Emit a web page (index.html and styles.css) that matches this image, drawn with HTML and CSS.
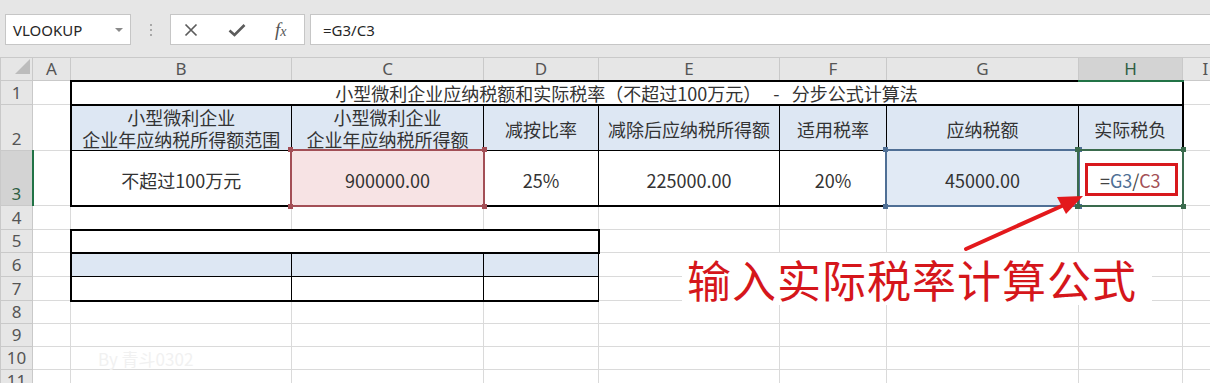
FILE: index.html
```html
<!DOCTYPE html>
<html lang="zh-CN">
<head>
    <meta charset="UTF-8">
    <meta name="viewport" content="width=device-width, initial-scale=1.0">
    <title>小型微利企业应纳税额和实际税率</title>
    <link rel="stylesheet" href="styles.css">
</head>
<body>
    <div class="toolbar">
        <div class="namebox">VLOOKUP<span class="caret"></span></div>
        <div class="grip"><i></i><i></i><i></i></div>
        <div class="fx-buttons">
            <svg class="btn-icon" width="16" height="16" viewBox="0 0 16 16">
                <path d="M2.5 2.5 L13.5 13.5 M13.5 2.5 L2.5 13.5" stroke="#5c5c5c" stroke-width="1.7" fill="none"/>
            </svg>
            <svg class="btn-icon" width="18" height="16" viewBox="0 0 18 16">
                <path d="M1.5 8.5 L6.5 13 L16.5 3" stroke="#5c5c5c" stroke-width="2.6" fill="none"/>
            </svg>
            <span class="fx">f<span>x</span></span>
        </div>
        <div class="formula">=G3/C3</div>
    </div>

    <div class="sheet-wrap">
        <table class="sheet">
            <colgroup>
                <col class="w-rh"><col class="w-a"><col class="w-b"><col class="w-c"><col class="w-d">
                <col class="w-e"><col class="w-f"><col class="w-g"><col class="w-h"><col class="w-i">
            </colgroup>
            <tr class="r-head">
                <th class="corner"><span class="tri"></span></th>
                <th>A</th><th>B</th><th>C</th><th>D</th><th>E</th><th>F</th><th>G</th><th class="on-col">H</th><th>I</th>
            </tr>
            <tr class="r1">
                <th class="rn">1</th><td></td>
                <td colspan="7" class="title">小型微利企业应纳税额和实际税率（不超过100万元）&nbsp;&nbsp;&nbsp;-&nbsp;&nbsp;&nbsp;分步公式计算法</td>
                <td></td>
            </tr>
            <tr class="r2">
                <th class="rn">2</th><td></td>
                <td class="hd first">小型微利企业<br>企业年应纳税所得额范围</td>
                <td class="hd">小型微利企业<br>企业年应纳税所得额</td>
                <td class="hd single">减按比率</td>
                <td class="hd single">减除后应纳税所得额</td>
                <td class="hd single">适用税率</td>
                <td class="hd single">应纳税额</td>
                <td class="hd single last">实际税负</td>
                <td></td>
            </tr>
            <tr class="r3">
                <th class="rn on-row">3</th><td></td>
                <td class="val first">不超过100万元</td>
                <td class="val ref-c num">900000.00
                    <span class="sel sel-c"><i class="tl"></i><i class="tr"></i><i class="bl"></i><i class="br"></i></span>
                </td>
                <td class="val num">25%</td>
                <td class="val num">225000.00</td>
                <td class="val num">20%</td>
                <td class="val ref-g num">45000.00
                    <span class="sel sel-g"><i class="tl"></i><i class="tr"></i><i class="bl"></i><i class="br"></i></span>
                </td>
                <td class="val last active num"><span class="op">=</span><span class="ref-g-txt">G3</span><span class="op">/</span><span class="ref-c-txt">C3</span>
                    <span class="sel sel-h"><i class="tl"></i><i class="tr"></i><i class="bl"></i><i class="br"></i></span>
                    <span class="mark"></span>
                </td>
                <td></td>
            </tr>
            <tr class="r4">
                <th class="rn">4</th><td></td><td></td><td></td><td></td><td></td><td></td><td></td><td></td><td></td>
            </tr>
            <tr class="r5">
                <th class="rn">5</th><td></td><td colspan="3" class="box-top"></td><td></td><td></td><td></td><td></td><td></td>
            </tr>
            <tr class="r6">
                <th class="rn">6</th><td></td><td class="band first"></td><td class="band"></td><td class="band last"></td><td></td><td></td><td></td><td></td><td></td>
            </tr>
            <tr class="r7">
                <th class="rn">7</th><td></td><td class="foot first"></td><td class="foot"></td><td class="foot last"></td><td></td><td></td><td></td><td></td><td></td>
            </tr>
            <tr class="r8">
                <th class="rn">8</th><td></td><td></td><td></td><td></td><td></td><td></td><td></td><td></td><td></td>
            </tr>
            <tr class="r9">
                <th class="rn">9</th><td></td><td></td><td></td><td></td><td></td><td></td><td></td><td></td><td></td>
            </tr>
            <tr class="r10">
                <th class="rn">10</th><td></td><td></td><td></td><td></td><td></td><td></td><td></td><td></td><td></td>
            </tr>
            <tr class="r11">
                <th class="rn">11</th><td></td><td></td><td></td><td></td><td></td><td></td><td></td><td></td><td></td>
            </tr>
        </table>

        <svg class="arrow" width="150" height="80" viewBox="0 0 150 80">
            <line x1="16" y1="64" x2="114" y2="20" stroke="#e3191c" stroke-width="4" stroke-linecap="round"/>
            <polygon points="133,11 116,29 107,12" fill="#e3191c"/>
        </svg>
        <div class="callout">输入实际税率计算公式</div>
        <div class="watermark">By 青斗0302</div>
    </div>
</body>
</html>
```

FILE: styles.css
```css
body {
    margin: 0;
    background: #ffffff;
    font-family: "Noto Sans CJK SC", "Noto Sans", sans-serif;
    overflow: hidden;
}

/* formula bar */
.toolbar {
    height: 57px;
    box-sizing: border-box;
    padding-top: 14px;
    background: #e6e6e6;
    display: flex;
    align-items: flex-start;
}
.namebox {
    margin-left: 5px;
    width: 126px;
    height: 31px;
    box-sizing: border-box;
    padding: 0 7px 0 7px;
    background: #fff;
    border: 1px solid #c6c6c6;
    display: flex;
    align-items: center;
    justify-content: space-between;
    font-family: "Noto Sans", sans-serif;
    font-size: 15px;
    color: #262626;
}
.caret {
    width: 0;
    height: 0;
    border-left: 4px solid transparent;
    border-right: 4px solid transparent;
    border-top: 4px solid #8a8a8a;
}
.grip {
    width: 39px;
    height: 31px;
    display: flex;
    flex-direction: column;
    align-items: center;
    justify-content: center;
    gap: 3px;
}
.grip i {
    width: 2px;
    height: 2px;
    background: #a8a8a8;
}
.fx-buttons {
    width: 135px;
    height: 31px;
    box-sizing: border-box;
    padding-left: 12px;
    background: #fff;
    border: 1px solid #c6c6c6;
    display: flex;
    align-items: center;
    gap: 29px;
}
.fx {
    font-family: "Liberation Serif", serif;
    font-style: italic;
    font-size: 19px;
    color: #555;
}
.fx span {
    font-size: 14px;
}
.formula {
    flex: 1;
    margin-left: 5px;
    height: 31px;
    box-sizing: border-box;
    padding-left: 12px;
    background: #fff;
    border: 1px solid #c6c6c6;
    border-right: none;
    display: flex;
    align-items: center;
    font-family: "Noto Sans", sans-serif;
    font-size: 15px;
    color: #262626;
}

/* grid */
.sheet-wrap {
    position: relative;
}
.sheet {
    border-collapse: collapse;
    table-layout: fixed;
    width: 1228px;
}
.w-rh { width: 32px; }
.w-a { width: 38px; }
.w-b { width: 221px; }
.w-c { width: 192px; }
.w-d { width: 115px; }
.w-e { width: 181px; }
.w-f { width: 107px; }
.w-g { width: 192px; }
.w-h { width: 104px; }
.w-i { width: 46px; }

.r-head { height: 23px; }
.r1 { height: 24px; }
.r2 { height: 46px; }
.r3 { height: 55px; }
.r4 { height: 24px; }
.r5 { height: 23px; }
.r6 { height: 24px; }
.r7 { height: 24px; }
.r8, .r9, .r10 { height: 23px; }
.r11 { height: 23px; }

.sheet th {
    padding: 0;
    background: #e6e6e6;
    border: 1px solid #c9c9c9;
    font-family: "Noto Sans", sans-serif;
    font-weight: 400;
    font-size: 17px;
    color: #555;
    line-height: 20px;
}
.sheet .rn {
    vertical-align: bottom;
    padding-bottom: 1px;
}
.corner {
    text-align: right;
    vertical-align: bottom;
}
.tri {
    display: inline-block;
    width: 0;
    height: 0;
    margin: 0 2px 2px 0;
    border-left: 15px solid transparent;
    border-bottom: 15px solid #bcbcbc;
}
.sheet .on-col {
    background: #d3d3d3;
    color: #2f5e43;
    border-bottom: 2px solid #217346;
}
.sheet .on-row {
    background: #d3d3d3;
    color: #2f5e43;
    border-right: 2px solid #217346;
}

.sheet td {
    padding: 0;
    border: 1px solid #dadada;
    text-align: center;
    font-size: 18px;
    color: #333;
}

/* tax table */
.title {
    border: 2px solid #000 !important;
    line-height: 20px;
}
.hd {
    background: #dde7f3;
    line-height: 22px;
    border-right: 1px solid #000 !important;
    border-bottom: 1px solid #000 !important;
}
.hd.single {
    padding-top: 3px !important;
}
.val {
    padding-top: 4px !important;
    border-right: 1px solid #000 !important;
    border-bottom: 2px solid #000 !important;
}
.num {
    font-size: 17px;
}
.first {
    border-left: 2px solid #000 !important;
}
.last {
    border-right: 2px solid #000 !important;
}
.ref-c {
    background: #f7e3e4;
    position: relative;
}
.ref-g {
    background: #e1eaf5;
    position: relative;
}
.active {
    position: relative;
}
.op { color: #444; }
.ref-g-txt { color: #4f6f95; }
.ref-c-txt { color: #a34f56; }

/* reference outlines */
.sel {
    position: absolute;
    top: -2px;
    left: -2px;
    right: -2px;
    bottom: -2px;
    border: 2px solid;
}
.sel i {
    position: absolute;
    width: 5px;
    height: 5px;
    background: currentColor;
}
.sel .tl { left: -4px; top: -4px; }
.sel .tr { right: -4px; top: -4px; }
.sel .bl { left: -4px; bottom: -4px; }
.sel .br { right: -4px; bottom: -4px; }
.sel-c { color: #a34f56; }
.sel-g { color: #4f6f95; }
.sel-h { color: #3a6b4d; }
.mark {
    position: absolute;
    left: 6px;
    top: 12px;
    width: 93px;
    height: 33px;
    box-sizing: border-box;
    border: 3px solid #d8181d;
}

/* lower block */
.box-top {
    border: 2px solid #000 !important;
}
.band {
    background: #dde7f3;
    border-right: 1px solid #000 !important;
    border-bottom: 1px solid #000 !important;
}
.foot {
    border-right: 1px solid #000 !important;
    border-bottom: 2px solid #000 !important;
}

/* annotation */
.arrow {
    position: absolute;
    left: 950px;
    top: 128px;
}
.callout {
    position: absolute;
    left: 682px;
    top: 196px;
    width: 470px;
    height: 52px;
    box-sizing: border-box;
    padding-left: 5px;
    background: #fff;
    font-size: 44px;
    line-height: 52px;
    letter-spacing: 1px;
    color: #d5161b;
    white-space: nowrap;
}
.watermark {
    position: absolute;
    left: 98px;
    top: 289px;
    font-size: 17px;
    color: #f1f1f1;
}
```
